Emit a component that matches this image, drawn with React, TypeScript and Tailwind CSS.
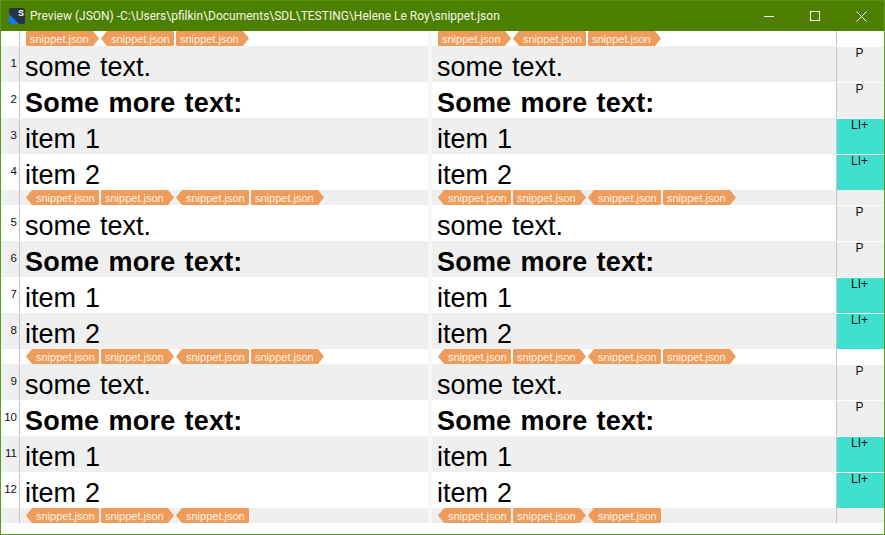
const ARROW_R = "[clip-path:polygon(0_1px,1px_0,calc(100%-6px)_0,100%_50%,calc(100%-6px)_100%,1px_100%,0_calc(100%-1px))]";
const ARROW_L = "[clip-path:polygon(6px_0,calc(100%-1px)_0,100%_1px,100%_calc(100%-1px),calc(100%-1px)_100%,6px_100%,0_50%)]";

function Tag({ dir }: { dir: "l" | "r" }) {
  return (
    <span
      className={
        dir === "r"
          ? `block w-[73px] h-[15px] pl-[4px] bg-[#ee9c5b] text-[11px] leading-[16px] text-[#fff2e6] whitespace-nowrap ${ARROW_R}`
          : `block w-[73px] h-[15px] pl-[10px] bg-[#ee9c5b] text-[11px] leading-[16px] text-[#fff2e6] whitespace-nowrap ${ARROW_L}`
      }
    >
      snippet.json
    </span>
  );
}

function Tags({ seq }: { seq: ("l" | "r")[] }) {
  return (
    <div className="flex gap-[2px] pl-[6px]">
      {seq.map((d, i) => (
        <Tag key={i} dir={d} />
      ))}
    </div>
  );
}

function TagRow({ seq, gray }: { seq: ("l" | "r")[]; gray: boolean }) {
  const bg = gray ? "bg-[#efefef]" : "bg-white";
  return (
    <div className="flex h-[15px] shrink-0">
      <div className={`w-[18px] ${bg}`} />
      <div className="w-[1px] bg-[#c4c4c4]" />
      <div className={`w-[408px] ${bg}`}>
        <Tags seq={seq} />
      </div>
      <div className="w-[4px] bg-[#f7f7f7]" />
      <div className={`w-[404px] ${bg}`}>
        <Tags seq={seq} />
      </div>
      <div className="w-[1px] bg-[#c4c4c4]" />
      <div className={`w-[47px] ${bg}`} />
    </div>
  );
}

function Row({ n, text, bold, gray, side }: { n: number; text: string; bold: boolean; gray: boolean; side: string }) {
  const bg = gray ? "bg-[#efefef]" : "bg-white";
  const cell = `h-full pl-[5px] text-[27px] leading-[42px] [word-spacing:1.5px] text-black whitespace-nowrap overflow-hidden ${bold ? "font-bold tracking-[0.2px]" : ""} ${bg}`;
  return (
    <div className="flex h-[36px] shrink-0">
      <div className={`w-[18px] flex items-center justify-end pr-[2px] text-[11.5px] text-[#111] ${bg}`}>{n}</div>
      <div className="w-[1px] h-full bg-white pt-[1px]">
        <div className="h-full bg-[#c4c4c4]" />
      </div>
      <div className={`w-[408px] ${cell}`}>{text}</div>
      <div className="w-[4px] bg-[#f7f7f7]" />
      <div className={`w-[404px] ${cell}`}>{text}</div>
      <div className="w-[1px] h-full bg-white pt-[1px]">
        <div className="h-full bg-[#c4c4c4]" />
      </div>
      <div className="w-[47px] h-full bg-white pt-[1px]">
        <div
          className={`h-full pr-[2px] text-center text-[12px] leading-[13px] text-[#111] ${side === "P" ? "bg-[#efefef]" : "bg-[#40e0d0]"}`}
        >
          {side}
        </div>
      </div>
    </div>
  );
}

const items = [
  { text: "some text.", bold: false, side: "P" },
  { text: "Some more text:", bold: true, side: "P" },
  { text: "item 1", bold: false, side: "LI+" },
  { text: "item 2", bold: false, side: "LI+" },
];

const L4: ("l" | "r")[] = ["l", "r", "l", "r"];

export default function App() {
  let n = 0;
  const group = (start: number) =>
    items.map((it, i) => {
      n += 1;
      return <Row key={n} n={n} text={it.text} bold={it.bold} side={it.side} gray={(start + i) % 2 === 0} />;
    });
  return (
    <div className="w-[885px] h-[535px] flex flex-col border-x border-b border-[#5c9a1c] bg-white font-['Liberation_Sans',Arial,sans-serif] overflow-hidden">
      <div className="-mx-px h-[31px] shrink-0 flex items-center bg-[#4d7f00] border-t border-[#5c8c14] text-white">
        <svg className="ml-[9px] w-[16px] h-[16px] shrink-0" viewBox="0 0 16 16">
          <rect width="16" height="16" rx="2" fill="#2a3344" />
          <path d="M0 6 L10 16 H2 Q0 16 0 14 Z" fill="#0f7fe8" />
          <text x="9" y="7.5" fontSize="9" fontWeight="700" fill="#fff" fontFamily="'Liberation Sans',sans-serif">S</text>
        </svg>
        <div className="ml-[5px] font-['Roboto',sans-serif] text-[12px] text-[#f4f7ec] whitespace-nowrap">
          Preview (JSON) -C:\Users\pfilkin\Documents\SDL\TESTING\Helene Le Roy\snippet.json
        </div>
        <div className="ml-auto mr-[1px] flex items-center">
          <div className="w-[46px] h-[30px] flex items-center justify-center">
            <svg width="10" height="10" viewBox="0 0 10 10"><path d="M0 5.5H10" stroke="#fff" strokeWidth="1" /></svg>
          </div>
          <div className="w-[46px] h-[30px] flex items-center justify-center">
            <svg width="10" height="10" viewBox="0 0 10 10"><rect x="0.5" y="0.5" width="9" height="9" fill="none" stroke="#fff" strokeWidth="1" /></svg>
          </div>
          <div className="w-[46px] h-[30px] flex items-center justify-center">
            <svg width="11" height="11" viewBox="0 0 11 11"><path d="M0.5 0.5L10.5 10.5M10.5 0.5L0.5 10.5" stroke="#fff" strokeWidth="1" /></svg>
          </div>
        </div>
      </div>
      <TagRow seq={["r", "l", "r"]} gray={false} />
      {group(0)}
      <TagRow seq={L4} gray={true} />
      {group(1)}
      <TagRow seq={L4} gray={false} />
      {group(0)}
      <TagRow seq={["l", "r", "l"]} gray={true} />
    </div>
  );
}
